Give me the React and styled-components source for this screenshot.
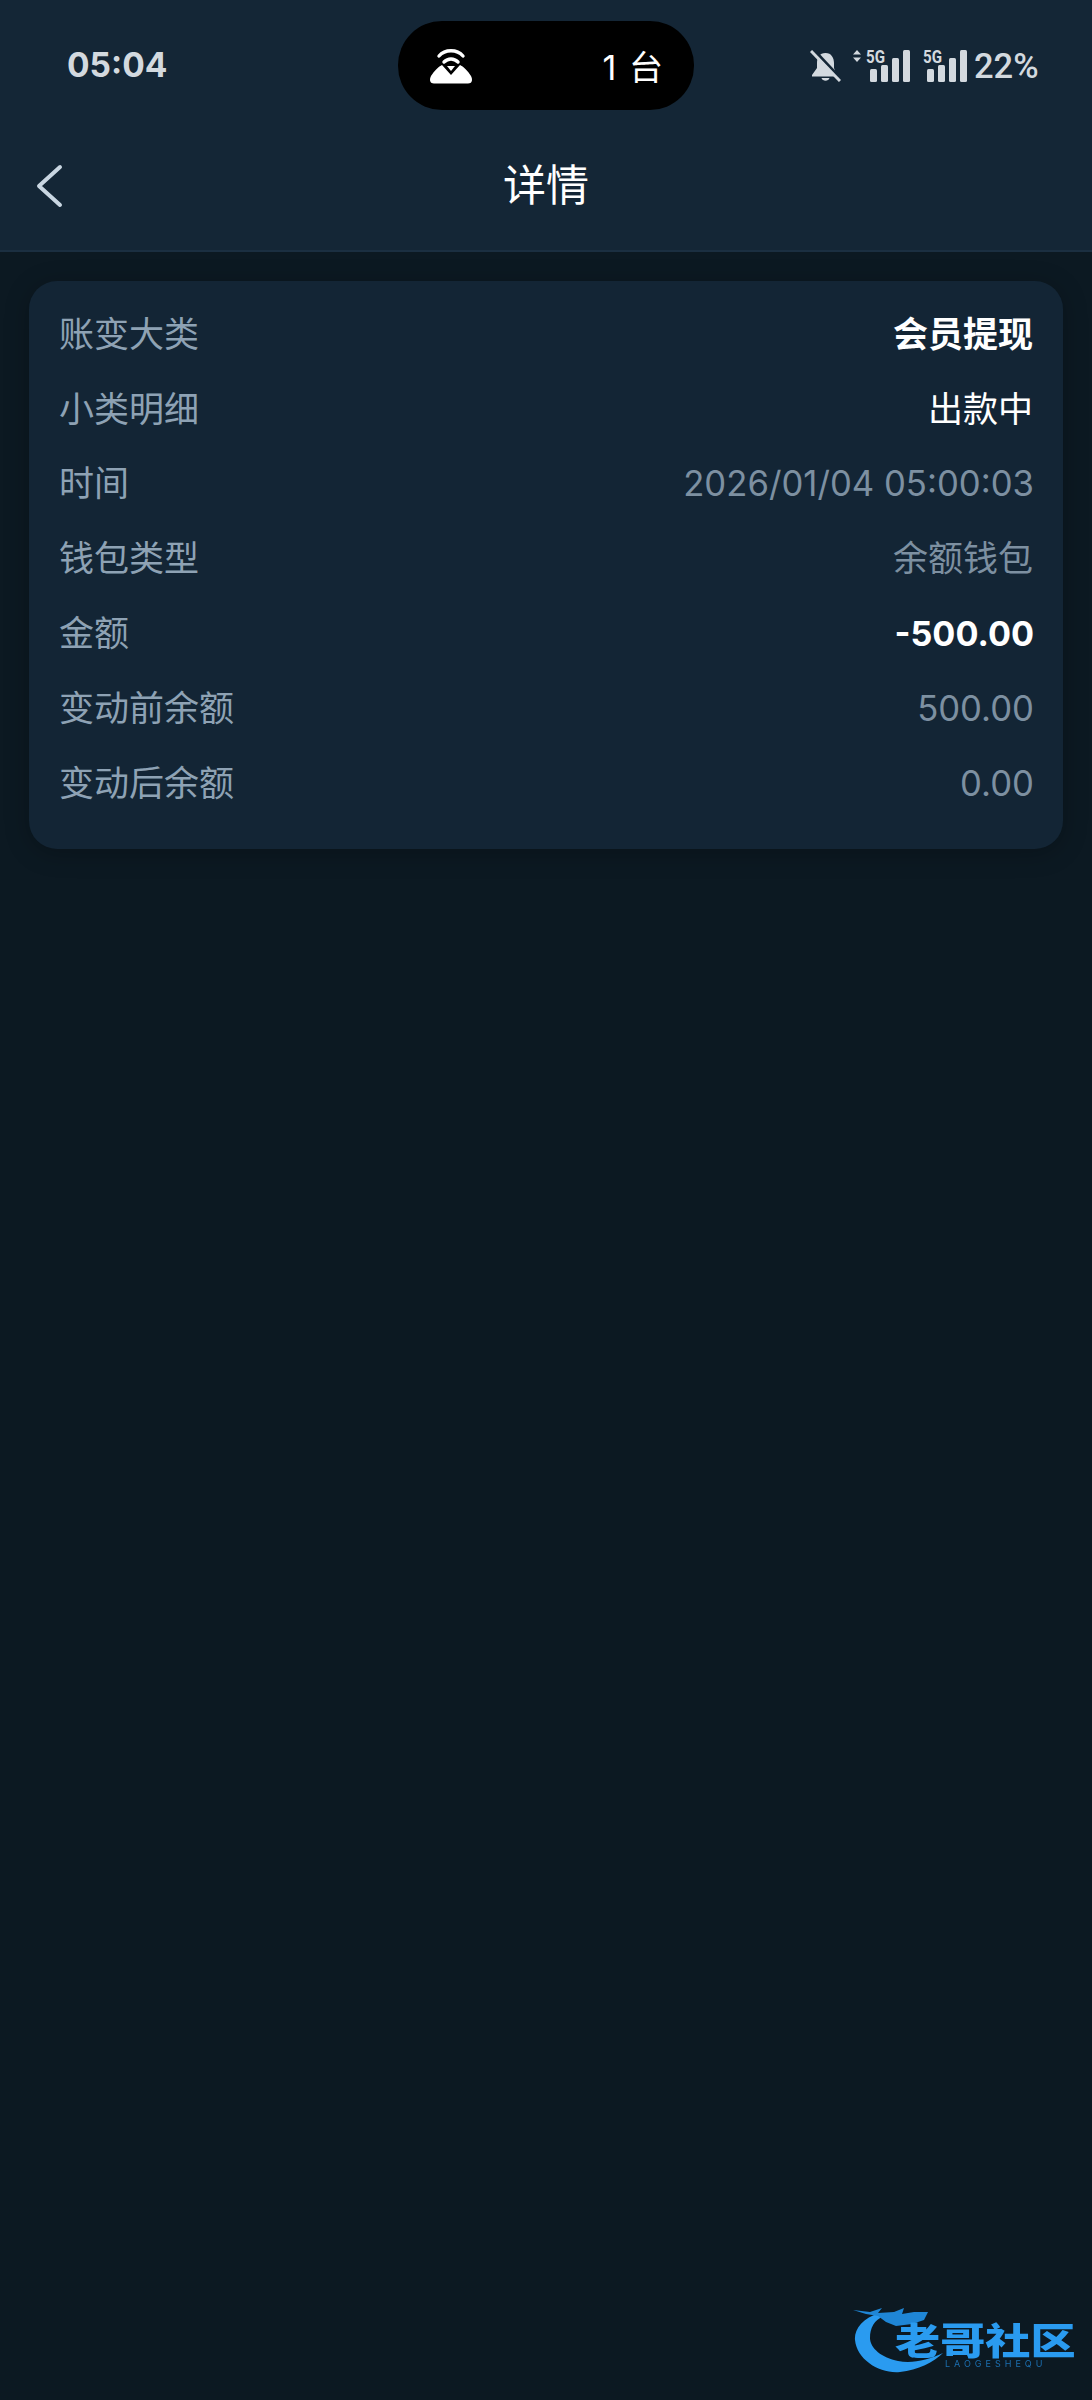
import React from 'react'
import styled, { createGlobalStyle } from 'styled-components'

const GlobalStyle = createGlobalStyle`
  html, body {
    margin: 0;
    padding: 0;
    background: #0c1922;
  }
  body {
    font-family: Inter, "Noto Sans CJK SC", sans-serif;
  }
`

const Page = styled.div`
  position: relative;
  width: 1092px;
  height: 2400px;
  overflow: hidden;
  background: #0c1922;
`
const Header = styled.header`
  background: #142636;
  border-bottom: 2px solid #1b2f41;
`
const StatusBar = styled.div`
  height: 110px;
  padding-top: 21px;
  box-sizing: border-box;
  display: grid;
  grid-template-columns: 1fr 296px 1fr;
  align-items: start;
`
const Clock = styled.div`
  height: 87px;
  padding-left: 67px;
  display: flex;
  align-items: center;
  font-size: 33.5px;
  font-weight: 700;
  color: #d3d9df;
`
const Island = styled.div`
  height: 89px;
  padding: 0 31px 0 30px;
  box-sizing: border-box;
  border-radius: 44px;
  background: #000;
  display: flex;
  align-items: center;
  justify-content: space-between;
`
const IslandText = styled.span`
  font-size: 34px;
  color: #fff;
  word-spacing: 3px;
`
const StatusIcons = styled.div`
  height: 89px;
  padding-left: 116px;
  display: flex;
  align-items: center;
  color: #d3d9df;
`
const Percent = styled.span`
  margin-left: 7px;
  font-size: 34.5px;
  font-weight: 500;
  font-family: Roboto, sans-serif;
  color: #d3d9df;
`
const Signal = styled.svg`
  display: block;
  margin-left: 11px;
  overflow: visible;
`
const NavBar = styled.nav`
  position: relative;
  height: 140px;
  box-sizing: border-box;
  padding-top: 10px;
  display: flex;
  align-items: center;
  justify-content: center;
`
const BackIcon = styled.svg`
  position: absolute;
  left: 34px;
  top: 54px;
`
const Title = styled.h1`
  margin: 0;
  font-size: 43px;
  line-height: 1;
  font-weight: 400;
  color: #fff;
`
const Content = styled.main`
  padding: 29px 29px 0;
`
const Card = styled.section`
  padding: 13px 30px 31px;
  border-radius: 28px;
  background: #132535;
  box-shadow: 0 4px 24px rgba(0, 0, 0, 0.25);
`
const Row = styled.div`
  height: 74.8px;
  display: flex;
  align-items: center;
  justify-content: space-between;
  font-size: 35px;
`
const Label = styled.span`
  color: #8ea2b4;
`
const Value = styled.span`
  color: ${props => (props.$tone === 'bright' ? '#ffffff' : '#7d90a1')};
  font-weight: ${props => (props.$bold ? 700 : 400)};
  font-size: ${props => (props.$latin ? (props.$bold ? '34.2px' : '34.7px') : '35px')};
  padding-top: ${props => (props.$latin ? '5px' : '0')};
  margin-right: ${props => (props.$latin ? '-1px' : '0')};
`
const Watermark = styled.div`
  position: absolute;
  left: 852px;
  bottom: 24px;
  width: 226px;
  height: 72px;
  filter: blur(0.6px);
`
const WatermarkArt = styled.svg`
  position: absolute;
  left: 0;
  top: 0;
`
const WatermarkName = styled.span`
  position: absolute;
  left: 43px;
  top: 22px;
  font-size: 37px;
  line-height: 32px;
  font-weight: 900;
  color: #2a9bf0;
  white-space: nowrap;
  transform: scaleX(1.22);
  transform-origin: left center;
`
const WatermarkLatin = styled.span`
  position: absolute;
  left: 93px;
  top: 55px;
  font-size: 9px;
  line-height: 10px;
  letter-spacing: 4px;
  color: #1c6fb0;
  white-space: nowrap;
`

const rows = [
  { label: '账变大类', value: '会员提现', tone: 'bright', bold: true },
  { label: '小类明细', value: '出款中', tone: 'bright' },
  { label: '时间', value: '2026/01/04 05:00:03', latin: true },
  { label: '钱包类型', value: '余额钱包' },
  { label: '金额', value: '-500.00', tone: 'bright', bold: true, latin: true },
  { label: '变动前余额', value: '500.00', latin: true },
  { label: '变动后余额', value: '0.00', latin: true },
]

const HotspotIcon = () => (
  <svg width="46" height="36" viewBox="0 0 46 36" fill="none">
    <path d="M11 8 C17 1 29 1 35 8" stroke="#fff" strokeWidth="3.4" strokeLinecap="round" />
    <path d="M16 14 C20 10 26 10 30 14" stroke="#fff" strokeWidth="3.4" strokeLinecap="round" />
    <path d="M19 18 L27 18 L23 23 Z" fill="#fff" />
    <path d="M14 17 L23 27 L32 17 C36 19 40 23 43 28 C45 32 44 35.5 40 35.5 L6 35.5 C2 35.500 1 32 3 28 C6 23 10 19 14 17 Z" fill="#fff" />
  </svg>
)

const MutedBell = () => (
  <svg width="31" height="32" viewBox="0 0 31 32" fill="none">
    <path d="M15.500 3 C9.500 3 7 8 7 13 L7 18 L2 25 L2 26.500 L27 26.500 L24 18 L24 13 C24 8 21.500 3 15.500 3 Z" fill="#d3d9df" />
    <path d="M11.500 28 L19.500 28 C18.500 31.500 12.500 31.500 11.500 28 Z" fill="#d3d9df" />
    <path d="M3 -1 L31 29" stroke="#142636" strokeWidth="3" />
    <path d="M1 1 L30 31" stroke="#d3d9df" strokeWidth="3" />
  </svg>
)

const SignalBars = ({ arrows }) => (
  <Signal width={arrows ? 58 : 46} height="35" viewBox={arrows ? '0 0 58 35' : '12 0 46 35'}>
    {arrows && <path d="M1 6.500 L5 2 L9 6.500 Z M1 9.500 L9 9.500 L5 14 Z" fill="#d3d9df" />}
    <text x="14" y="14.500" fontFamily="Roboto, sans-serif" fontSize="18" fontWeight="700" fill="#d3d9df" textLength="19" lengthAdjust="spacingAndGlyphs">5G</text>
    <rect x="18" y="21" width="7" height="13" rx="1.500" fill="#d3d9df" />
    <rect x="29" y="17" width="7" height="17" rx="1.500" fill="#d3d9df" />
    <rect x="40" y="10" width="7" height="24" rx="1.500" fill="#d3d9df" />
    <rect x="51" y="2" width="7" height="32" rx="1.500" fill="#d3d9df" />
  </Signal>
)

const DragonMark = () => (
  <WatermarkArt width="226" height="72" viewBox="0 0 226 72" fill="none">
    <path d="M28 9 C10 14 2 26 3 36 C5 56 28 70 48 68 C66 66 82 58 91 49 C76 56 60 60 46 57 C30 54 18 44 18 34 C18 24 22 16 32 12 Z" fill="#2a9bf0" />
    <path d="M1 6 L18 8 L30 4 L26 9 L42 8 L52 4 L50 10 L62 8 L76 8 L72 16 L60 20 L44 22 L34 18 L26 12 L14 10 Z" fill="#1f86d6" />
  </WatermarkArt>
)

const App = () => {
  return (
    <Page>
      <GlobalStyle />
      <Header>
        <StatusBar>
          <Clock>05:04</Clock>
          <Island>
            <HotspotIcon />
            <IslandText>1 台</IslandText>
          </Island>
          <StatusIcons>
            <MutedBell />
            <SignalBars arrows />
            <SignalBars />
            <Percent>22%</Percent>
          </StatusIcons>
        </StatusBar>
        <NavBar>
          <BackIcon width="30" height="44" viewBox="0 0 30 44" fill="none">
            <path d="M26 3 L5 22 L26 41" stroke="#c9d6e2" strokeWidth="4" strokeLinecap="round" strokeLinejoin="round" />
          </BackIcon>
          <Title>详情</Title>
        </NavBar>
      </Header>
      <Content>
        <Card>
          {rows.map(row => (
            <Row key={row.label}>
              <Label>{row.label}</Label>
              <Value $tone={row.tone} $bold={row.bold} $latin={row.latin}>{row.value}</Value>
            </Row>
          ))}
        </Card>
      </Content>
      <Watermark>
        <DragonMark />
        <WatermarkName>老哥社区</WatermarkName>
        <WatermarkLatin>LAOGESHEQU</WatermarkLatin>
      </Watermark>
    </Page>
  )
}

export default App
